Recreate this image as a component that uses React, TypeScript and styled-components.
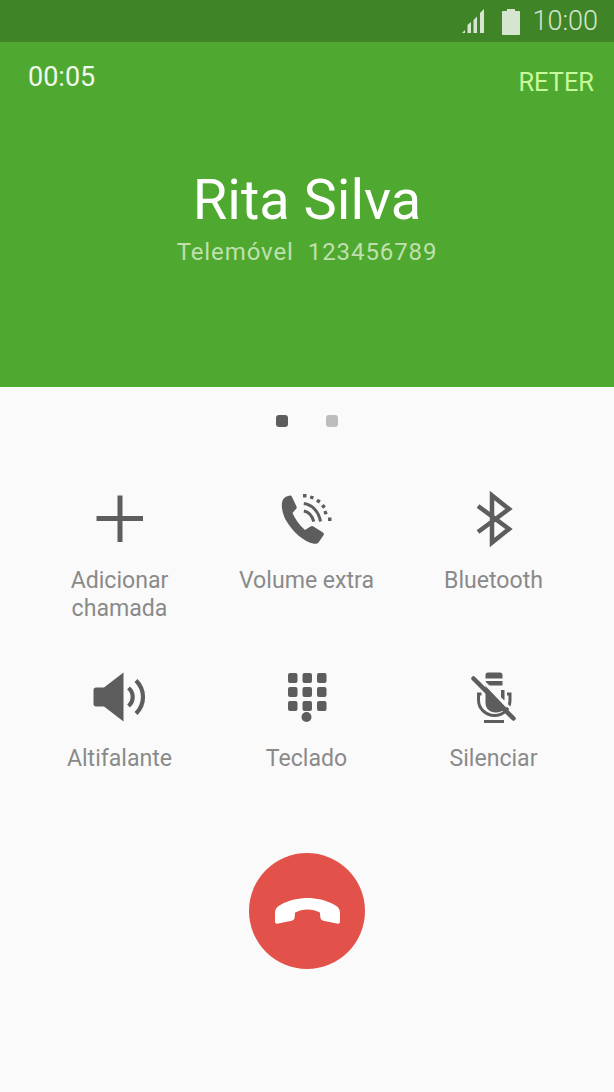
import React from "react";
import styled, { createGlobalStyle } from "styled-components";

const Global = createGlobalStyle`
  html, body {
    margin: 0;
    padding: 0;
    background: #fafafa;
  }
  * {
    box-sizing: border-box;
  }
`;

const actions = [
  { label: "Adicionar\nchamada", icon: <PlusIcon /> },
  { label: "Volume extra", icon: <VolumeCallIcon /> },
  { label: "Bluetooth", icon: <BluetoothIcon /> },
  { label: "Altifalante", icon: <SpeakerIcon /> },
  { label: "Teclado", icon: <KeypadIcon /> },
  { label: "Silenciar", icon: <MuteIcon /> },
];

export default function App() {
  return (
    <Screen>
      <Global />
      <StatusBar>
        <SignalIcon />
        <BatteryIcon />
        <Clock>10:00</Clock>
      </StatusBar>
      <CallHeader>
        <HeaderRow>
          <Timer>00:05</Timer>
          <Hold>RETER</Hold>
        </HeaderRow>
        <Name>Rita Silva</Name>
        <Number>
          <span>Telemóvel</span>
          <span>123456789</span>
        </Number>
      </CallHeader>
      <Pager>
        <Dot active />
        <Dot />
      </Pager>
      <Grid>
        {actions.map((a) => (
          <Action key={a.label}>
            <IconSlot>{a.icon}</IconSlot>
            <Label>{a.label}</Label>
          </Action>
        ))}
      </Grid>
      <EndRow>
        <EndButton>
          <svg width="65" height="26" viewBox="0 0 65 26">
            <path
              d="M0 15C0 11 2 8.500 5.700 6.700 14 2 24 0 32.500 0S51 2 59.300 6.700C63 8.500 65 11 65 15v8c0 2-.5 2.700-2 2.700L48.300 22.700c-2.300-.7-2.800-1.700-3-3.700l-.4-4.500C41 12.500 37 11.500 32.500 11.500S24 12.500 20.100 14.500l-.4 4.500c-.2 2-.7 3-3 3.700L2 25.700c-1.500 0-2-.7-2-2.700z"
              fill="#fff"
            />
          </svg>
        </EndButton>
      </EndRow>
    </Screen>
  );
}

function PlusIcon() {
  return (
    <svg width="60" height="60" viewBox="0 0 60 60">
      <path d="M30 6.500v46.500M6.500 29.500h46.500" stroke="#5d5d5d" strokeWidth="5" fill="none" />
    </svg>
  );
}

function VolumeCallIcon() {
  return (
    <svg width="60" height="60" viewBox="0 0 60 60" fill="#5d5d5d">
      <path d="M9.500 7.500l3.500-1c.8-.2 1.400.2 1.800 1l4.700 10c.4 1 .2 1.700-.5 2.400l-3.500 4.100c2.500 6 7 12.500 12.500 17l5.500-3.500c.8-.7 1.600-.8 2.500-.2l10 6.200c1 .7 1.200 1.800.5 2.700L41.500 53.500c-1.200 1.300-2.600 1.500-4.500 1.300C27 53 15.500 43 8.500 30.500 5.500 24.500 4.300 18 5 14c.3-3 2-5.500 4.500-6.500z" />
      <path d="M26.800 14.500c8.500 1.200 15 8 16.700 18M26.800 22c4.500.8 8.500 5 10 10.700" stroke="#5d5d5d" strokeWidth="3" fill="none" />
      <path d="M26 5h3.500v3.500H26zM33.500 6.500l3.400.8-.9 3.200-3.300-.9zM40.800 9.800l3 1.800-1.800 3-3-1.900zM46.700 15l2.200 2.600-2.700 2.200-2.200-2.600zM49.500 21.500l1.200 3.200-3.200 1.100-1.100-3.200zM51 28.500h3.500v3.500H51z" stroke="none" />
    </svg>
  );
}

function BluetoothIcon() {
  return (
    <svg width="60" height="60" viewBox="0 0 60 60">
      <path d="M14 17l31 23-17 13.500V6.500L45 20 14 43" stroke="#5d5d5d" strokeWidth="4.500" fill="none" />
    </svg>
  );
}

function SpeakerIcon() {
  return (
    <svg width="60" height="60" viewBox="0 0 60 60" fill="#5d5d5d">
      <path d="M3.500 23c0-1.500 1-2.500 2.500-2.500h8L33.500 5.500v49L14 39.500H6c-1.500 0-2.500-1-2.500-2.500z" />
      <path d="M38.500 21c3 2.500 4.200 5 4.200 9s-1.200 6.500-4.200 9M46 13.500c5 5 7 10 7 16.500s-2 11.500-7 16.500" stroke="#5d5d5d" strokeWidth="4.200" fill="none" />
    </svg>
  );
}

function KeypadIcon() {
  const cells = [0, 1, 2].flatMap((row) => [0, 1, 2].map((col) => [11 + col * 14.5, 6 + row * 14] as const));
  return (
    <svg width="60" height="60" viewBox="0 0 60 60" fill="#5d5d5d">
      {cells.map(([x, y]) => (
        <rect key={`${x}-${y}`} x={x} y={y} width="9.500" height="10" rx="2" />
      ))}
      <circle cx="29.500" cy="50" r="5" />
    </svg>
  );
}

function MuteIcon() {
  return (
    <svg width="60" height="60" viewBox="0 0 60 60" fill="none" stroke="#5d5d5d">
      <path d="M21.500 8c0-1.500 1-2.500 2.500-2.500h12c1.500 0 2.500 1 2.500 2.500v3.500h-17zM21.500 14h17v4.500h-17z" fill="#5d5d5d" stroke="none" />
      <path d="M21.500 19l21 22c-2.500 2.800-7 4.500-11 4.500-5.500 0-10-4-10-9.500zM37 23h3.500v10H37z" fill="#5d5d5d" stroke="none" />
      <path d="M14.500 27v6c0 8.500 7 15.500 16 15.500s15.500-7 15.500-15.500v-6M13 27h4.500M43 27h4.500" strokeWidth="3" />
      <path d="M20 54.500h20" strokeWidth="3" />
      <path d="M13 8l40 40" stroke="#fafafa" strokeWidth="2.500" />
      <path d="M9.500 11.500l40 40" strokeWidth="4.500" strokeLinecap="round" />
    </svg>
  );
}

function SignalIcon() {
  return (
    <svg width="22" height="24" viewBox="0 0 22 24" fill="#d6e5cf">
      <path d="M0 24l3-3v3zM5.500 24v-8l3.500-3v11zM11.500 24V11l3.500-3.500V24zM18 24V4l4-4v24z" />
    </svg>
  );
}

function BatteryIcon() {
  return (
    <svg width="18" height="26" viewBox="0 0 18 26" fill="#d6e5cf">
      <path d="M5 0h8v2h4c.6 0 1 .4 1 1v22c0 .6-.4 1-1 1H1c-.6 0-1-.4-1-1V3c0-.6.4-1 1-1h4z" />
    </svg>
  );
}

const Screen = styled.div`
  width: 614px;
  height: 1092px;
  display: flex;
  flex-direction: column;
  background: #fafafa;
  font-family: Roboto, "Liberation Sans", sans-serif;
  overflow: hidden;
`;

const StatusBar = styled.div`
  height: 42px;
  flex: none;
  background: #3f8528;
  display: flex;
  align-items: center;
  justify-content: flex-end;
  padding-right: 16px;
  svg:first-child {
    margin-right: 18px;
  }
  svg:nth-child(2) {
    margin-right: 12px;
    margin-top: 1px;
  }
`;

const Clock = styled.span`
  color: #d6e5cf;
  font-size: 27px;
  font-weight: 300;
  line-height: 42px;
`;

const CallHeader = styled.div`
  height: 345px;
  flex: none;
  background: #4fa82f;
  display: flex;
  flex-direction: column;
  align-items: center;
  padding: 20px 20px 0 28px;
`;

const HeaderRow = styled.div`
  align-self: stretch;
  display: flex;
  justify-content: space-between;
`;

const Timer = styled.span`
  color: #f1f8ed;
  font-size: 27px;
  line-height: 30px;
`;

const Hold = styled.span`
  color: #c8fa9c;
  font-size: 25.4px;
  line-height: 30px;
  margin-top: 5px;
`;

const Name = styled.div`
  color: #fff;
  font-size: 56px;
  line-height: 64px;
  margin-top: 71px;
  margin-left: -8px;
`;

const Number = styled.div`
  color: #bfe0ae;
  font-size: 24px;
  line-height: 30px;
  margin-top: 5px;
  margin-left: -8px;
  display: flex;
  gap: 14px;
  letter-spacing: 0.9px;
`;

const Pager = styled.div`
  height: 67px;
  flex: none;
  display: flex;
  align-items: center;
  justify-content: center;
  gap: 38px;
`;

const Dot = styled.div<{ active?: boolean }>`
  width: 12px;
  height: 12px;
  border-radius: 3px;
  background: ${(p) => (p.active ? "#5d5d5d" : "#bdbdbd")};
`;

const Grid = styled.div`
  display: grid;
  grid-template-columns: repeat(3, 187px);
  grid-auto-rows: 178px;
  padding-left: 26px;
  margin-top: 35px;
`;

const Action = styled.div`
  display: flex;
  flex-direction: column;
  align-items: center;
`;

const IconSlot = styled.div`
  height: 60px;
  display: flex;
  align-items: center;
  justify-content: center;
`;

const Label = styled.div`
  color: #8a8a8a;
  font-size: 23.1px;
  line-height: 28px;
  margin-top: 18px;
  text-align: center;
  white-space: pre-line;
`;

const EndRow = styled.div`
  display: flex;
  justify-content: center;
  margin-top: 8px;
`;

const EndButton = styled.div`
  width: 116px;
  height: 116px;
  border-radius: 50%;
  background: #e2524a;
  display: flex;
  align-items: center;
  justify-content: center;
`;
